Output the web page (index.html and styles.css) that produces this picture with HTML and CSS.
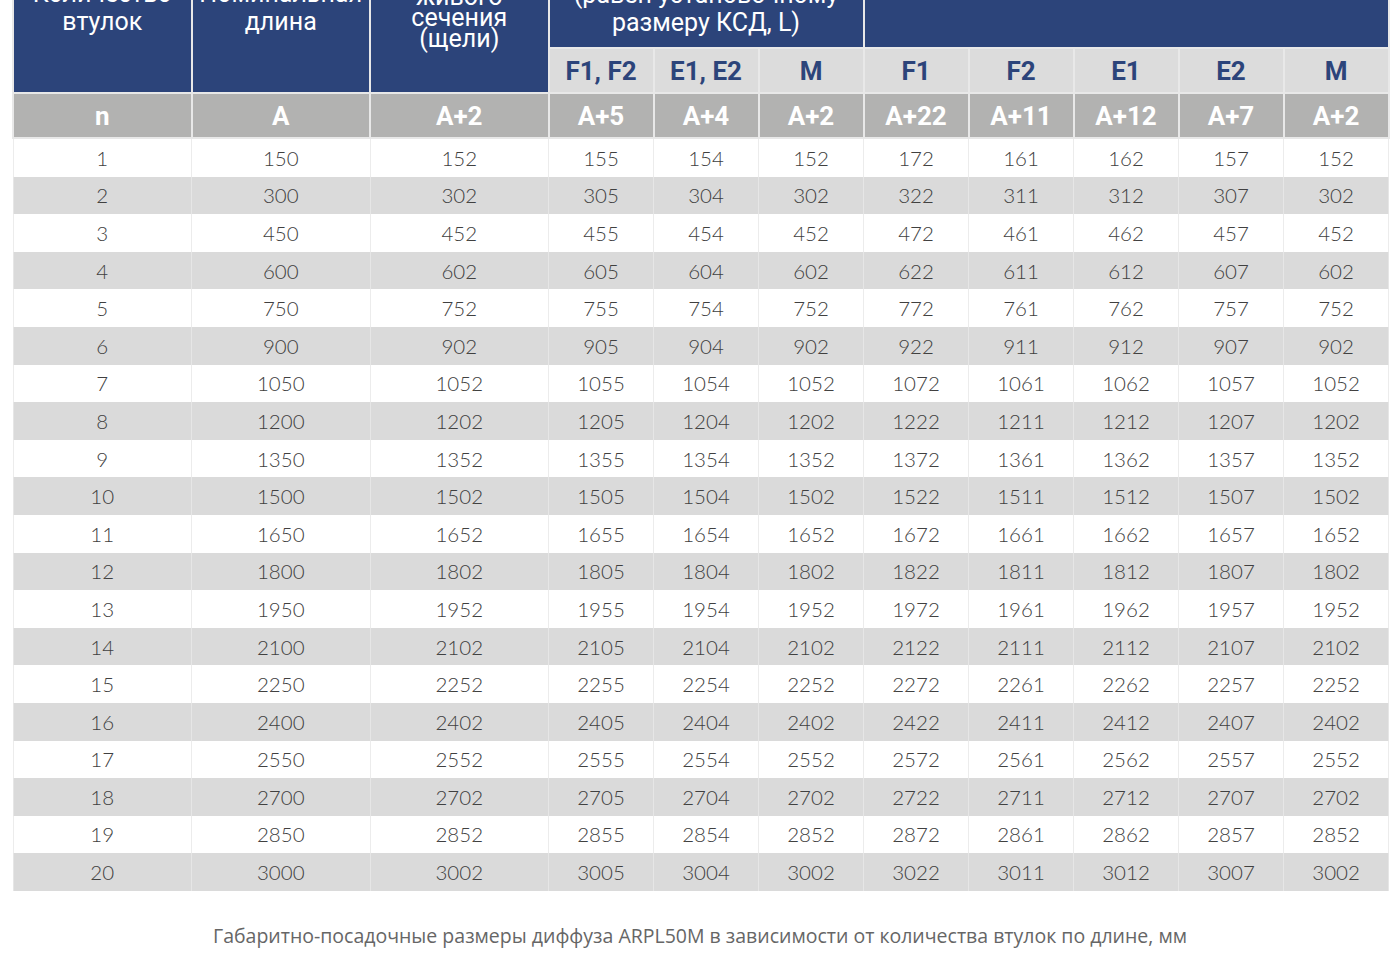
FILE: index.html
```html
<!DOCTYPE html>
<html lang="ru">
<head>
<meta charset="utf-8">
<title>Габаритно-посадочные размеры диффуза ARPL50M</title>
<link rel="stylesheet" href="styles.css">
</head>
<body>
<main class="page">
  <table class="sizes">
    <colgroup>
      <col class="c-wide"><col class="c-wide"><col class="c-wide">
      <col class="c-narrow"><col class="c-narrow"><col class="c-narrow"><col class="c-narrow">
      <col class="c-narrow"><col class="c-narrow"><col class="c-narrow"><col class="c-narrow">
    </colgroup>
    <thead>
      <tr class="r-title">
        <th rowspan="2" class="h-main">Количество<br>втулок</th>
        <th rowspan="2" class="h-main">Номинальная<br>длина</th>
        <th rowspan="2" class="h-main h-tight">Площадь<br>живого<br>сечения<br>(щели)</th>
        <th colspan="3" class="h-group">Длина корпуса<br>(равен установочному<br>размеру КСД, L)</th>
        <th colspan="5" class="h-group h-hidden">Габаритная длина диффузора с торцевыми заглушками</th>
      </tr>
      <tr class="r-types">
        <th>F1, F2</th><th>E1, E2</th><th>M</th>
        <th>F1</th><th>F2</th><th>E1</th><th>E2</th><th>M</th>
      </tr>
      <tr class="r-formula">
        <th>n</th><th>A</th><th>A+2</th>
        <th>A+5</th><th>A+4</th><th>A+2</th>
        <th>A+22</th><th>A+11</th><th>A+12</th><th>A+7</th><th>A+2</th>
      </tr>
    </thead>
    <tbody>
      <tr><td>1</td><td>150</td><td>152</td><td>155</td><td>154</td><td>152</td><td>172</td><td>161</td><td>162</td><td>157</td><td>152</td></tr>
      <tr><td>2</td><td>300</td><td>302</td><td>305</td><td>304</td><td>302</td><td>322</td><td>311</td><td>312</td><td>307</td><td>302</td></tr>
      <tr><td>3</td><td>450</td><td>452</td><td>455</td><td>454</td><td>452</td><td>472</td><td>461</td><td>462</td><td>457</td><td>452</td></tr>
      <tr><td>4</td><td>600</td><td>602</td><td>605</td><td>604</td><td>602</td><td>622</td><td>611</td><td>612</td><td>607</td><td>602</td></tr>
      <tr><td>5</td><td>750</td><td>752</td><td>755</td><td>754</td><td>752</td><td>772</td><td>761</td><td>762</td><td>757</td><td>752</td></tr>
      <tr><td>6</td><td>900</td><td>902</td><td>905</td><td>904</td><td>902</td><td>922</td><td>911</td><td>912</td><td>907</td><td>902</td></tr>
      <tr><td>7</td><td>1050</td><td>1052</td><td>1055</td><td>1054</td><td>1052</td><td>1072</td><td>1061</td><td>1062</td><td>1057</td><td>1052</td></tr>
      <tr><td>8</td><td>1200</td><td>1202</td><td>1205</td><td>1204</td><td>1202</td><td>1222</td><td>1211</td><td>1212</td><td>1207</td><td>1202</td></tr>
      <tr><td>9</td><td>1350</td><td>1352</td><td>1355</td><td>1354</td><td>1352</td><td>1372</td><td>1361</td><td>1362</td><td>1357</td><td>1352</td></tr>
      <tr><td>10</td><td>1500</td><td>1502</td><td>1505</td><td>1504</td><td>1502</td><td>1522</td><td>1511</td><td>1512</td><td>1507</td><td>1502</td></tr>
      <tr><td>11</td><td>1650</td><td>1652</td><td>1655</td><td>1654</td><td>1652</td><td>1672</td><td>1661</td><td>1662</td><td>1657</td><td>1652</td></tr>
      <tr><td>12</td><td>1800</td><td>1802</td><td>1805</td><td>1804</td><td>1802</td><td>1822</td><td>1811</td><td>1812</td><td>1807</td><td>1802</td></tr>
      <tr><td>13</td><td>1950</td><td>1952</td><td>1955</td><td>1954</td><td>1952</td><td>1972</td><td>1961</td><td>1962</td><td>1957</td><td>1952</td></tr>
      <tr><td>14</td><td>2100</td><td>2102</td><td>2105</td><td>2104</td><td>2102</td><td>2122</td><td>2111</td><td>2112</td><td>2107</td><td>2102</td></tr>
      <tr><td>15</td><td>2250</td><td>2252</td><td>2255</td><td>2254</td><td>2252</td><td>2272</td><td>2261</td><td>2262</td><td>2257</td><td>2252</td></tr>
      <tr><td>16</td><td>2400</td><td>2402</td><td>2405</td><td>2404</td><td>2402</td><td>2422</td><td>2411</td><td>2412</td><td>2407</td><td>2402</td></tr>
      <tr><td>17</td><td>2550</td><td>2552</td><td>2555</td><td>2554</td><td>2552</td><td>2572</td><td>2561</td><td>2562</td><td>2557</td><td>2552</td></tr>
      <tr><td>18</td><td>2700</td><td>2702</td><td>2705</td><td>2704</td><td>2702</td><td>2722</td><td>2711</td><td>2712</td><td>2707</td><td>2702</td></tr>
      <tr><td>19</td><td>2850</td><td>2852</td><td>2855</td><td>2854</td><td>2852</td><td>2872</td><td>2861</td><td>2862</td><td>2857</td><td>2852</td></tr>
      <tr><td>20</td><td>3000</td><td>3002</td><td>3005</td><td>3004</td><td>3002</td><td>3022</td><td>3011</td><td>3012</td><td>3007</td><td>3002</td></tr>
    </tbody>
  </table>
  <p class="caption">Габаритно-посадочные размеры диффуза ARPL50M в зависимости от количества втулок по длине, мм</p>
</main>
</body>
</html>
```

FILE: styles.css
```css
html, body {
  margin: 0;
  padding: 0;
  background: #ffffff;
}

body {
  font-family: Roboto, "Liberation Sans", sans-serif;
  overflow: hidden;
}

.page {
  padding: 0 12px;
}

.sizes {
  width: 1376px;
  margin-top: -75px;
  border-collapse: collapse;
  table-layout: fixed;
}

.c-wide { width: 178.5px; }
.c-narrow { width: 105px; }

.sizes th {
  padding: 0 4px;
  border: 2px solid #e8e8e8;
  text-align: center;
}

.r-title th {
  background: #2c447a;
  color: #ffffff;
  font-weight: 400;
  font-size: 25px;
  line-height: 28px;
  vertical-align: bottom;
  height: 106px;
}

.r-title .h-main {
  padding-bottom: 56px;
}

.r-title .h-tight {
  line-height: 21px;
  padding-bottom: 43px;
}

.r-title .h-group {
  padding-bottom: 10px;
}

.r-title .h-hidden {
  vertical-align: top;
  padding-top: 4px;
}

.r-types th {
  height: 43px;
  background: #dcdcdc;
  color: #2c447a;
  font-weight: 700;
  font-size: 26px;
  line-height: 30px;
  vertical-align: middle;
}

.r-formula th {
  height: 43px;
  background: #b2b2b1;
  color: #ffffff;
  font-weight: 700;
  font-size: 26px;
  line-height: 30px;
  vertical-align: middle;
}

.sizes td {
  height: 37.6px;
  padding: 0;
  border-left: 1px solid #ececec;
  border-right: 1px solid #ececec;
  text-align: center;
  vertical-align: middle;
  font-family: Lato, Roboto, sans-serif;
  font-weight: 300;
  font-size: 20.5px;
  line-height: 24px;
  color: #404040;
}

.sizes tbody tr:nth-child(even) td {
  background: #dadada;
  border-left-color: #e6e6e6;
  border-right-color: #e6e6e6;
}

.caption {
  margin: 33px 0 0;
  text-align: center;
  font-family: "Open Sans", "Liberation Sans", sans-serif;
  font-size: 19.5px;
  line-height: 24px;
  color: #666666;
}
```
